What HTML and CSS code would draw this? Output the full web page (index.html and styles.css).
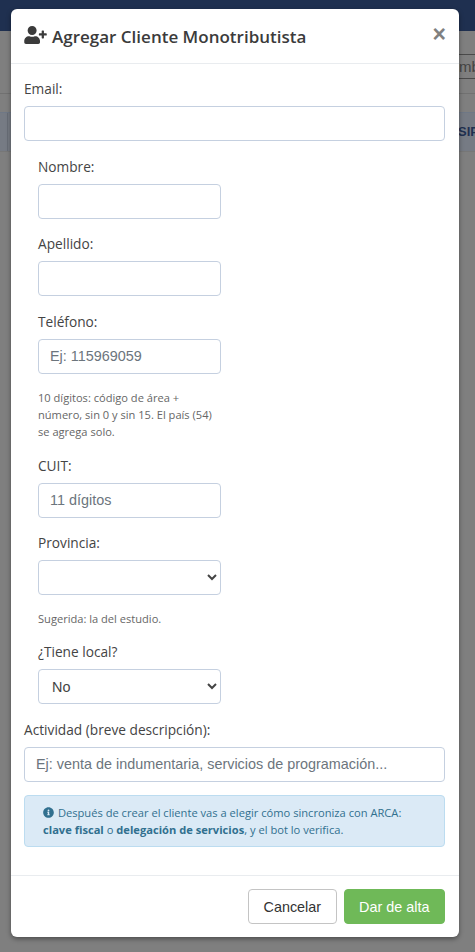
FILE: index.html
```html
<!DOCTYPE html>
<html lang="en">
<head>
    <meta charset="UTF-8">
    <meta name="viewport" content="width=device-width, initial-scale=1.0">
    <title>Agregar Cliente Monotributista</title>
    <link rel="stylesheet" href="styles.css">
</head>
<body>
    <div class="navbar"></div>
    <div class="behind">
        <span class="behind-search">mb</span>
        <span class="behind-rule"></span>
        <span class="behind-band"></span>
        <span class="behind-cell">SIP</span>
    </div>

    <div class="modal">
        <div class="modal-header">
            <svg class="user-icon" viewBox="0 0 640 512" width="23" height="18" aria-hidden="true">
                <path fill="currentColor" d="M224 256c70.700 0 128-57.300 128-128S294.700 0 224 0 96 57.300 96 128s57.300 128 128 128zm89.600 32h-16.700c-22.200 10.200-46.900 16-72.900 16s-50.600-5.800-72.900-16h-16.700C60.200 288 0 348.200 0 422.400V464c0 26.500 21.500 48 48 48h352c26.500 0 48-21.500 48-48v-41.600c0-74.200-60.200-134.400-134.400-134.400zM624 208h-64v-64c0-8.800-7.200-16-16-16h-32c-8.800 0-16 7.200-16 16v64h-64c-8.800 0-16 7.200-16 16v32c0 8.800 7.200 16 16 16h64v64c0 8.800 7.200 16 16 16h32c8.800 0 16-7.200 16-16v-64h64c8.800 0 16-7.200 16-16v-32c0-8.800-7.200-16-16-16z"/>
            </svg>
            <h4 class="modal-title">Agregar Cliente Monotributista</h4>
            <span class="close">×</span>
        </div>

        <div class="modal-body">
            <div class="form-group">
                <label for="email">Email:</label>
                <input type="text" id="email" class="form-control">
            </div>

            <div class="narrow">
                <div class="form-group">
                    <label for="nombre">Nombre:</label>
                    <input type="text" id="nombre" class="form-control">
                </div>
                <div class="form-group">
                    <label for="apellido">Apellido:</label>
                    <input type="text" id="apellido" class="form-control">
                </div>
                <div class="form-group">
                    <label for="telefono">Teléfono:</label>
                    <input type="text" id="telefono" class="form-control" placeholder="Ej: 115969059">
                    <p class="help">10 dígitos: código de área + número, sin 0 y sin 15. El país (54) se agrega solo.</p>
                </div>
                <div class="form-group">
                    <label for="cuit">CUIT:</label>
                    <input type="text" id="cuit" class="form-control" placeholder="11 dígitos">
                </div>
                <div class="form-group">
                    <label for="provincia">Provincia:</label>
                    <select id="provincia" class="form-control form-select">
                        <option></option>
                    </select>
                    <p class="help help-short">Sugerida: la del estudio.</p>
                </div>
                <div class="form-group">
                    <label for="local">¿Tiene local?</label>
                    <select id="local" class="form-control form-select">
                        <option>No</option>
                    </select>
                </div>
            </div>

            <div class="form-group">
                <label for="actividad">Actividad (breve descripción):</label>
                <input type="text" id="actividad" class="form-control" placeholder="Ej: venta de indumentaria, servicios de programación...">
            </div>

            <div class="alert">
                <svg class="info-icon" viewBox="0 0 512 512" width="11" height="11" aria-hidden="true">
                    <path fill="currentColor" d="M256 8C119 8 8 119 8 256s111 248 248 248 248-111 248-248S393 8 256 8zm0 110c23.200 0 42 18.800 42 42s-18.800 42-42 42-42-18.800-42-42 18.800-42 42-42zm56 254c0 6.600-5.400 12-12 12h-88c-6.600 0-12-5.400-12-12v-24c0-6.600 5.400-12 12-12h12v-64h-12c-6.600 0-12-5.400-12-12v-24c0-6.600 5.400-12 12-12h64c6.600 0 12 5.400 12 12v100h12c6.600 0 12 5.400 12 12v24z"/>
                </svg>
                Después de crear el cliente vas a elegir cómo sincroniza con ARCA:<br>
                <strong>clave fiscal</strong> o <strong>delegación de servicios</strong>, y el bot lo verifica.
            </div>
        </div>

        <div class="modal-footer">
            <button class="btn btn-default">Cancelar</button>
            <button class="btn btn-success">Dar de alta</button>
        </div>
    </div>
</body>
</html>
```

FILE: styles.css
```css
* {
    box-sizing: border-box;
}
html, body {
    height: 100%;
}
body {
    margin: 0;
    background: #7f7f7f;
    font-family: "Open Sans", "Noto Sans", sans-serif;
    color: #3b3b3b;
    overflow: hidden;
}
.navbar {
    height: 31px;
    background: #1f3050;
}
.behind {
    position: relative;
}
.behind-search {
    position: absolute;
    top: 23px;
    left: 459px;
    width: 16px;
    height: 25px;
    border-top: 1px solid #4a4a4a;
    border-bottom: 1px solid #4a4a4a;
    font-family: "Liberation Sans", sans-serif;
    font-size: 15px;
    line-height: 23px;
    color: #444;
    white-space: nowrap;
    overflow: hidden;
}
.behind-rule {
    position: absolute;
    top: 62px;
    left: 0;
    width: 100%;
    height: 1px;
    background: #717171;
}
.behind-band {
    position: absolute;
    top: 81px;
    left: 0;
    width: 100%;
    height: 40px;
    background: #767b84;
    border-top: 1px solid #6f7886;
    border-bottom: 1px solid #777;
}
.behind-band::before {
    content: "";
    position: absolute;
    top: 0;
    bottom: 0;
    left: 7px;
    width: 1px;
    background: #686d76;
}
.behind-cell {
    position: absolute;
    top: 81px;
    left: 458px;
    width: 17px;
    height: 40px;
    font-family: "Liberation Sans", sans-serif;
    font-size: 13px;
    font-weight: 700;
    line-height: 40px;
    color: #1f3050;
    overflow: hidden;
}
.modal {
    position: absolute;
    top: 9px;
    left: 11px;
    width: 448px;
    height: 928px;
    display: flex;
    flex-direction: column;
    background: #fff;
    border-radius: 6px;
    box-shadow: 0 2px 5px rgba(0,0,0,0.4);
}
.modal-header {
    height: 55px;
    display: flex;
    align-items: center;
    padding: 0 14px 0 13px;
    border-bottom: 1px solid #e9ecef;
}
.user-icon {
    color: #3b3b3b;
    margin-right: 5px;
    margin-top: -3px;
}
.modal-title {
    flex: 1;
    margin: 0;
    font-size: 17px;
    font-weight: 600;
    color: #3b3b3b;
}
.close {
    font-family: "Liberation Sans", sans-serif;
    font-size: 23px;
    font-weight: 700;
    line-height: 1;
    color: #808080;
    margin-top: -4px;
    margin-right: -1px;
}
.modal-body {
    flex: 1;
    padding: 16px 14px 0 13px;
}
.narrow {
    width: 183px;
    margin-left: 14px;
}
.form-group {
    margin-bottom: 16.5px;
}
label {
    display: block;
    height: 18px;
    margin-bottom: 8px;
    font-size: 13.700px;
    line-height: 18px;
    color: #444;
}
.form-control {
    display: block;
    width: 100%;
    height: 35px;
    padding: 6px 11px;
    background: #fff;
    border: 1px solid #c5d0e0;
    border-radius: 4px;
    font-family: "Liberation Sans", sans-serif;
    font-size: 14.400px;
    color: #444;
}
.form-select {
    padding-left: 9px;
}
.form-control::placeholder {
    color: #6c757d;
    opacity: 1;
}
.help {
    margin: 15.5px 0 0;
    font-size: 11.100px;
    line-height: 17px;
    color: #666;
}
.help-short {
    margin-top: 14.500px;
}
.alert {
    height: 52px;
    margin-top: -3px;
    padding: 8px 18px;
    background: #dbeaf6;
    border: 1px solid #bcdcf0;
    border-radius: 4px;
    font-size: 11.150px;
    line-height: 17px;
    color: #31708f;
}
.info-icon {
    vertical-align: -1px;
    margin-right: 1px;
}
.modal-footer {
    height: 62px;
    display: flex;
    justify-content: flex-end;
    gap: 7px;
    padding: 13px 14px 0 0;
    border-top: 1px solid #e9ecef;
}
.btn {
    height: 35px;
    padding: 0 14.5px;
    border-radius: 4px;
    font-family: "Liberation Sans", sans-serif;
    font-size: 14.400px;
    cursor: pointer;
}
.btn-default {
    background: #fff;
    border: 1px solid #c4c4c4;
    color: #333;
}
.btn-success {
    background: #6fb958;
    border: 1px solid #6fb958;
    color: #fff;
}
```
